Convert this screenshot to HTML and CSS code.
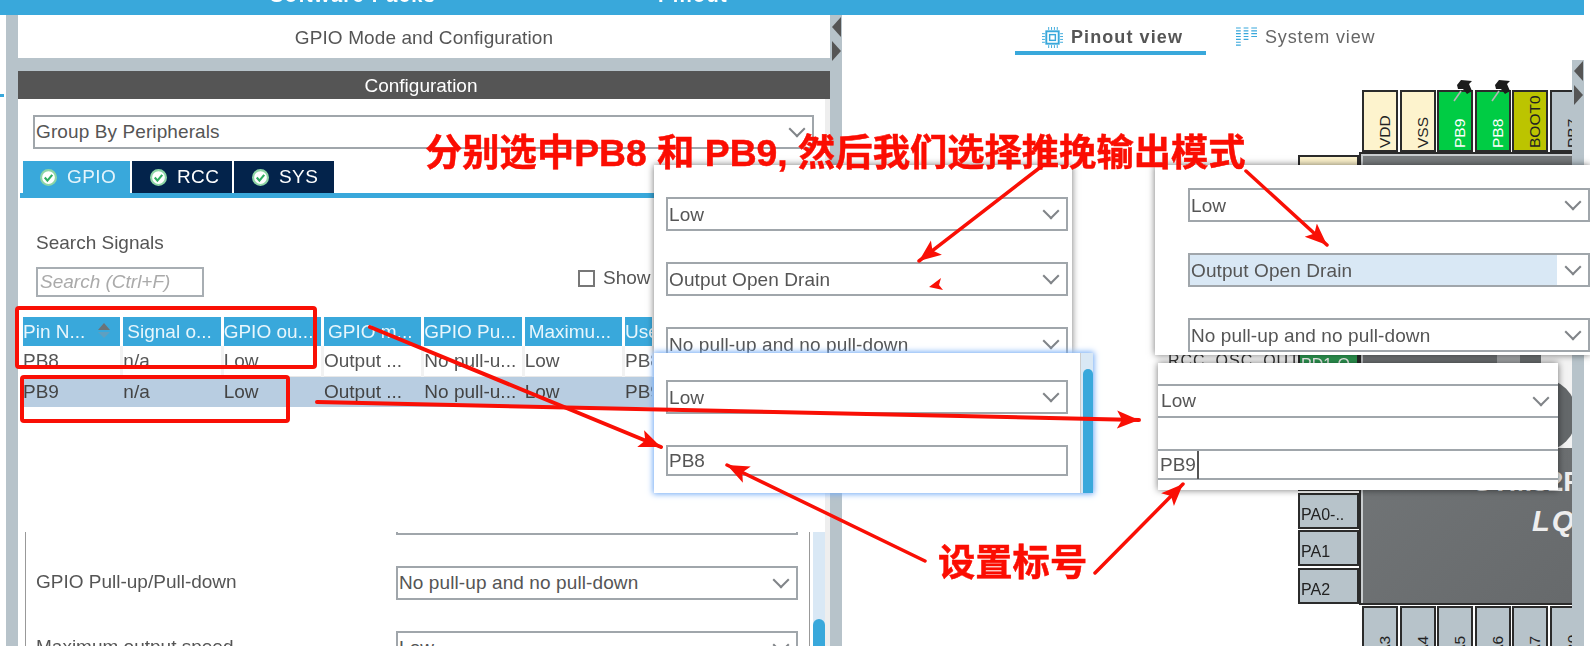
FILE: index.html
```html
<!DOCTYPE html>
<html lang="en">
<head>
  <meta charset="UTF-8" />
  <title>GPIO Mode and Configuration</title>
  <link rel="stylesheet" href="styles.css">
</head>
<body>
  <!-- Top menu, only the lower edge of the labels shows -->
  <header class="topbar">
    <span class="topbar-item packs">Software Packs</span>
    <span class="topbar-item pinout">Pinout</span>
  </header>

  <div class="main">
    <div class="gutter"><div class="gutter-mark"></div></div>

    <!-- Left panel -->
    <section class="panel">
      <div class="panel-title">GPIO Mode and Configuration</div>
      <div class="panel-header">Configuration</div>
      <div class="panel-body">
        <div class="select group-select"><span>Group By Peripherals</span></div>
        <div class="tabs">
          <div class="tab active"><svg class="check" viewBox="0 0 16 16"><circle cx="8" cy="8" r="7" fill="#fff" stroke="#8ed6a6" stroke-width="2"/><path d="M4.5 8l2.5 3 4.5-5.5" fill="none" stroke="#2fae62" stroke-width="2"/></svg>GPIO</div>
          <div class="tab"><svg class="check" viewBox="0 0 16 16"><circle cx="8" cy="8" r="7" fill="#fff" stroke="#8ed6a6" stroke-width="2"/><path d="M4.5 8l2.5 3 4.5-5.5" fill="none" stroke="#2fae62" stroke-width="2"/></svg>RCC</div>
          <div class="tab"><svg class="check" viewBox="0 0 16 16"><circle cx="8" cy="8" r="7" fill="#fff" stroke="#8ed6a6" stroke-width="2"/><path d="M4.5 8l2.5 3 4.5-5.5" fill="none" stroke="#2fae62" stroke-width="2"/></svg>SYS</div>
        </div>
        <div class="search-label">Search Signals</div>
        <div class="search-row">
          <div class="search-input">Search (Ctrl+F)</div>
          <div class="show-modified"><span class="checkbox"></span>Show</div>
        </div>

        <div class="pin-table">
          <div class="th">Pin N...<span class="sort"></span></div>
          <div class="th pad">Signal o...</div>
          <div class="th">GPIO ou...</div>
          <div class="th pad">GPIO m...</div>
          <div class="th">GPIO Pu...</div>
          <div class="th pad">Maximu...</div>
          <div class="th">User Label</div>

          <div class="td">PB8</div>
          <div class="td">n/a</div>
          <div class="td">Low</div>
          <div class="td">Output ...</div>
          <div class="td">No pull-u...</div>
          <div class="td">Low</div>
          <div class="td">PB8</div>

          <div class="td sel">PB9</div>
          <div class="td sel">n/a</div>
          <div class="td sel">Low</div>
          <div class="td sel">Output ...</div>
          <div class="td sel">No pull-u...</div>
          <div class="td sel">Low</div>
          <div class="td sel">PB9</div>
        </div>

        <div class="settings">
          <div class="settings-form">
            <div class="select-stub"></div>
            <div class="form-row">
              <label>GPIO Pull-up/Pull-down</label>
              <div class="select"><span>No pull-up and no pull-down</span></div>
            </div>
            <div class="form-row">
              <label>Maximum output speed</label>
              <div class="select"><span>Low</span></div>
            </div>
          </div>
          <div class="settings-scroll"><div class="thumb"></div></div>
        </div>
      </div>
    </section>

    <div class="splitter">
      <span class="arrow-left"></span>
      <span class="arrow-right"></span>
    </div>

    <!-- Right panel -->
    <section class="pinout-pane">
      <nav class="view-tabs">
        <div class="view-tab current">
          <svg class="view-icon" viewBox="0 0 22 22" fill="none" stroke="#39a8db">
            <rect x="4.5" y="4.5" width="13" height="13" stroke-width="2"/>
            <rect x="8" y="8" width="6" height="6" stroke-width="1.5"/>
            <path d="M7 0v3M10 0v3M13 0v3M16 0v3M7 19v3M10 19v3M13 19v3M16 19v3M0 7h3M0 10h3M0 13h3M0 16h3M19 7h3M19 10h3M19 13h3M19 16h3" stroke-width="1"/>
          </svg>
          Pinout view
        </div>
        <div class="view-tab">
          <svg class="view-icon" viewBox="0 0 22 22" fill="none" stroke="#39a8db" stroke-width="1.2">
            <path d="M0 1h5M0 4h5M0 7h5M0 10h5M0 13h5M0 16h5M0 19h5M8 1h5M8 4h5M8 7h5M8 10h5M8 13h5M16 1h6M16 4h6M16 7h6M16 10h6"/>
          </svg>
          System view
        </div>
      </nav>

      <div class="chip-canvas">
        <div class="pins-top">
          <div class="pin cream v">VDD</div>
          <div class="pin cream v">VSS</div>
          <div class="pin green v">PB9
            <svg class="pushpin" viewBox="0 0 20 22"><path d="M1 21l7-10" stroke="#b5b5b5" stroke-width="1.6"/><path d="M4 5l4-5 11 1-3 3 3 7-5 3-4-5-5 0z" fill="#1c1c1c"/></svg>
          </div>
          <div class="pin green v">PB8
            <svg class="pushpin" viewBox="0 0 20 22"><path d="M1 21l7-10" stroke="#b5b5b5" stroke-width="1.6"/><path d="M4 5l4-5 11 1-3 3 3 7-5 3-4-5-5 0z" fill="#1c1c1c"/></svg>
          </div>
          <div class="pin olive v">BOOT0</div>
          <div class="pin grey v">PB7</div>
        </div>

        <div class="pins-left">
          <div class="pin cream">VBAT</div>
          <div class="pin grey">PC13</div>
          <div class="pin grey">PC14</div>
          <div class="pin grey">PC15</div>
          <div class="pin dkgreen">PD0-O..</div>
          <div class="pin dkgreen">PD1-O..</div>
          <div class="pin grey">NRST</div>
          <div class="pin cream">VSSA</div>
          <div class="pin cream">VDDA</div>
          <div class="pin grey">PA0-..</div>
          <div class="pin grey">PA1</div>
          <div class="pin grey">PA2</div>
        </div>
        <div class="pin-signal">RCC_OSC_OUT</div>

        <div class="chip">
          <div class="chip-logo"><div class="logo-circle"></div></div>
          <div class="logo-block"></div>
          <div class="chip-name">STM32F</div>
          <div class="chip-package">LQFP48</div>
        </div>

        <div class="pins-bottom">
          <div class="pin grey v">PA3</div>
          <div class="pin grey v">PA4</div>
          <div class="pin grey v">PA5</div>
          <div class="pin grey v">PA6</div>
          <div class="pin grey v">PA7</div>
          <div class="pin grey v">PB0</div>
        </div>
      </div>
    </section>

    <div class="splitter right">
      <span class="arrow-left"></span>
      <span class="arrow-right"></span>
    </div>
  </div>

  <!-- Pasted-in crops of the settings form -->
  <div class="popup popup-a">
    <div class="select"><span>Low</span></div>
    <div class="select"><span>Output Open Drain</span></div>
    <div class="select"><span>No pull-up and no pull-down</span></div>
  </div>
  <div class="popup popup-b">
    <div class="select"><span>Low</span></div>
    <div class="select highlighted"><span>Output Open Drain</span></div>
    <div class="select"><span>No pull-up and no pull-down</span></div>
  </div>
  <div class="popup popup-c">
    <div class="select"><span>Low</span></div>
    <div class="text-field">PB8</div>
    <div class="popup-scroll"><div class="thumb"></div></div>
  </div>
  <div class="popup popup-d">
    <div class="select"><span>Low</span></div>
    <div class="text-field"><span class="caret">PB9</span></div>
  </div>

  <!-- Red annotations -->
  <svg class="marks" width="1590" height="646" viewBox="0 0 1590 646">
    <defs>
      <marker id="head" markerUnits="userSpaceOnUse" markerWidth="24" markerHeight="20" refX="22" refY="10" orient="auto">
        <path d="M0 1L22 10L0 19L5 10z" fill="#f90f05"/>
      </marker>
    </defs>
    <g fill="none" stroke="#f90f05" stroke-linejoin="round" stroke-linecap="round">
      <rect x="17" y="308" width="298" height="59" rx="2" stroke-width="4"/>
      <rect x="22" y="377" width="266" height="44" rx="2" stroke-width="4"/>
      <path d="M1042 166L919 261" stroke-width="3.5" marker-end="url(#head)"/>
      <path d="M1246 171L1327 245" stroke-width="3.5" marker-end="url(#head)"/>
      <path d="M370 327L661 447" stroke-width="4" marker-end="url(#head)"/>
      <path d="M317 402L1139 420" stroke-width="4" marker-end="url(#head)"/>
      <path d="M925 561L727 465" stroke-width="3.5" marker-end="url(#head)"/>
      <path d="M1095 573L1183 484" stroke-width="3.5" marker-end="url(#head)"/>
    </g>
    <path d="M929 287L941 278L939 285L943 290z" fill="#f90f05"/>
  </svg>
  <div class="note note-top">分别选中PB8 和 PB9, 然后我们选择推挽输出模式</div>
  <div class="note note-bottom">设置标号</div>
</body>
</html>
```

FILE: styles.css
```css
* {
  box-sizing: border-box;
}

html, body {
  margin: 0;
  height: 646px;
  overflow: hidden;
}

body {
  position: relative;
  width: 1590px;
  background: white;
  color: #555;
  font-family: "Liberation Sans", Arial, sans-serif;
  font-size: 19px;
}

/* The source is a soft, upscaled capture */
.topbar,
.main,
.popup {
  filter: blur(0.35px);
}

/* Top bar */
.topbar {
  display: flex;
  width: 1584px;
  height: 15px;
  overflow: hidden;
  background: #39a8db;
}

.topbar-item {
  color: white;
  font-weight: bold;
  font-size: 20px;
  letter-spacing: 1.3px;
  line-height: 20px;
  margin-top: -15px;
}

.packs {
  margin-left: 270px;
}

.pinout {
  margin-left: 222px;
}

.main {
  display: flex;
  height: 631px;
}

.gutter {
  width: 18px;
  background: linear-gradient(to right, white 6px, #b7c3ca 6px);
}

.gutter-mark {
  width: 4px;
  height: 3px;
  margin-top: 79px;
  background: #39a8db;
}

/* Left panel */
.panel {
  width: 812px;
  display: flex;
  flex-direction: column;
}

.panel-title {
  height: 43px;
  line-height: 45px;
  text-align: center;
  letter-spacing: 0.1px;
  margin-bottom: 13px;
}

.panel-header {
  height: 28px;
  line-height: 29px;
  padding-right: 6px;
  text-align: center;
  background: #555;
  color: white;
  box-shadow: 0 -13px 0 #b7c3ca;
}

.panel-body {
  flex: 1;
  overflow: hidden;
  padding-top: 16px;
  background: linear-gradient(to right, white 807px, #eee 807px);
}

/* Selects */
.select {
  position: relative;
  height: 34px;
  border: 2px solid #a0a6ab;
  background: white;
  line-height: 30px;
  padding-left: 1px;
  white-space: nowrap;
  letter-spacing: 0.1px;
}

.select::after {
  content: "";
  position: absolute;
  right: 9px;
  top: 6px;
  width: 10px;
  height: 10px;
  border-right: 2px solid #808488;
  border-bottom: 2px solid #808488;
  transform: rotate(45deg);
}

.select.highlighted span {
  display: block;
  width: 367px;
  height: 30px;
  margin-left: -1px;
  padding-left: 1px;
  background: #d9e8f5;
}

.group-select {
  width: 781px;
  margin-left: 15px;
}

.text-field {
  height: 31px;
  border: 2px solid #a0a6ab;
  line-height: 28px;
  padding-left: 1px;
  background: white;
}

/* GPIO / RCC / SYS tabs */
.tabs {
  display: flex;
  gap: 2px;
  height: 37px;
  margin: 12px 12px 0 2px;
  padding-left: 3px;
  border-bottom: 5px solid #39a8db;
}

.tab {
  display: flex;
  align-items: center;
  gap: 10px;
  width: 100px;
  height: 32px;
  padding-left: 18px;
  background: #03234b;
  color: white;
  letter-spacing: 0.4px;
}

.tab.active {
  width: 107px;
  padding-left: 17px;
  background: #39a8db;
  color: #e4f4fb;
}

.check {
  width: 17px;
  height: 17px;
}

/* Search */
.search-label {
  margin: 35px 0 0 18px;
  line-height: 20px;
}

.search-row {
  display: flex;
  align-items: flex-start;
  margin: 14px 0 0 18px;
}

.search-input {
  width: 168px;
  height: 30px;
  border: 2px solid #a8aeb3;
  line-height: 26px;
  padding-left: 2px;
  color: #aaa;
  font-style: italic;
}

.show-modified {
  display: flex;
  align-items: center;
  gap: 8px;
  margin: 0 0 0 374px;
}

.checkbox {
  width: 17px;
  height: 17px;
  border: 2px solid #777;
}

/* Pin table, the last column runs on under the pasted crop */
.pin-table {
  display: grid;
  grid-template-columns: repeat(6, 97.33px) 27px;
  column-gap: 3px;
  grid-template-rows: 29px 31px 30px;
  margin: 20px 0 0 5px;
  white-space: nowrap;
}

.th {
  position: relative;
  background: #39a8db;
  color: #e8f6fc;
  line-height: 29px;
  overflow: hidden;
}

.th.pad {
  padding-left: 4px;
}

.sort {
  position: absolute;
  left: 75px;
  top: 6px;
  border: 6px solid transparent;
  border-top: 0;
  border-bottom: 7px solid #6b7378;
}

.sort::after {
  content: "";
  position: absolute;
  left: -6px;
  top: 9px;
  border: 6px solid transparent;
  border-bottom: 0;
  border-top: 6px solid #5f9fc0;
}

.td {
  line-height: 30px;
  border-bottom: 1px solid #e8e8e8;
  overflow: hidden;
  box-shadow: 3px 0 0 #f2f2f2;
}

.td.sel {
  background: #b8cde1;
  box-shadow: 3px 0 0 #b8cde1;
  border-bottom: 0;
  color: #444;
}

/* Settings form below the table */
.settings {
  display: flex;
  gap: 3px;
  margin: 125px 0 0 7px;
}

.settings-form {
  width: 785px;
  height: 120px;
  border-left: 1px solid #999;
  border-right: 1px solid #999;
  padding-left: 10px;
}

.select-stub {
  width: 402px;
  height: 3px;
  margin-left: 360px;
  border: 2px solid #a0a6ab;
  border-top: 0;
}

.form-row {
  display: grid;
  grid-template-columns: 360px 402px;
  align-items: center;
  margin-top: 31px;
}

.form-row label {
  margin-top: -3px;
}

.settings-scroll {
  width: 12px;
  height: 120px;
  overflow: hidden;
  background: #d9e8f5;
}

.settings-scroll .thumb {
  height: 40px;
  margin-top: 87px;
  border-radius: 6px 6px 0 0;
  background: #39a8db;
}

/* Arrows on the splitters */
.splitter {
  width: 12px;
  background: #b7c3ca;
  padding: 2px 0 0 2px;
}

.splitter.right {
  margin-top: 45px;
  padding-top: 1px;
}

.arrow-left,
.arrow-right {
  display: block;
  width: 0;
  border: 10px solid transparent;
  border-left-width: 0;
  border-right-width: 0;
}

.arrow-left {
  border-right: 9px solid #555;
}

.arrow-right {
  margin-top: 4px;
  border-left: 9px solid #555;
}

/* Right panel */
.pinout-pane {
  width: 730px;
  display: flex;
  flex-direction: column;
}

.view-tabs {
  display: flex;
  height: 40px;
  padding-left: 173px;
}

.view-tab {
  display: flex;
  align-items: center;
  gap: 8px;
  height: 40px;
  padding-top: 4px;
  color: #666;
  font-size: 18px;
  letter-spacing: 0.85px;
  margin-left: 30px;
}

.view-tab.current {
  justify-content: center;
  width: 191px;
  margin-left: 0;
  padding: 8px 0 0 4px;
  color: #555;
  font-weight: bold;
  letter-spacing: 1.1px;
  border-bottom: 4px solid #39a8db;
}

.view-icon {
  width: 21px;
  height: 21px;
}

/* Chip diagram */
.chip-canvas {
  position: relative;
  flex: 1;
  overflow: hidden;
}

.pins-top,
.pins-bottom {
  position: absolute;
  left: 520px;
  display: flex;
  gap: 1.5px;
}

.pins-top {
  top: 35px;
}

.pins-bottom {
  top: 551px;
}

.pins-left {
  position: absolute;
  left: 456px;
  top: 100px;
  display: flex;
  flex-direction: column;
  gap: 1.5px;
}

.pin {
  position: relative;
  flex: none;
  width: 61px;
  height: 36px;
  border: 2px solid #2b2b2b;
  color: #222;
  font-size: 16px;
  line-height: 40px;
  padding-left: 1px;
  white-space: nowrap;
}

.pin.v {
  width: 36px;
  height: 62px;
  padding: 2px 0 0 0;
  font-size: 15.5px;
  line-height: 41px;
  writing-mode: vertical-rl;
  transform: rotate(180deg);
  text-align: left;
}

.cream { background: #fdf3cd; }
.green { background: #00cc44; color: white; }
.dkgreen { background: #2f9e55; color: white; }
.olive { background: #bcc400; }
.grey { background: #b7c3ca; }

/* local bottom is the top on screen, the pin cell is turned 180deg */
.pushpin {
  position: absolute;
  left: -2px;
  bottom: -12px;
  width: 20px;
  height: 22px;
  transform: rotate(180deg);
}

.pin-signal {
  position: absolute;
  left: 326px;
  top: 297px;
  font-size: 16px;
  color: #333;
  letter-spacing: 1px;
}

.chip {
  position: absolute;
  left: 517px;
  top: 97px;
  width: 240px;
  height: 453px;
  overflow: hidden;
  border: 2px solid #2b2b2b;
  box-shadow: inset 2px 2px 0 #c9cdcf;
  background: linear-gradient(135deg, #7a7e80, #66696b);
}

.chip-logo {
  position: absolute;
  left: 180px;
  top: 201px;
  width: 60px;
  height: 93px;
  overflow: hidden;
  background: #f3f3f3;
}

.logo-circle {
  position: absolute;
  left: -38px;
  top: 23px;
  width: 74px;
  height: 74px;
  border-radius: 50%;
  background: #64686a;
}

.logo-block {
  position: absolute;
  left: 136px;
  top: 201px;
  width: 23px;
  height: 10px;
  background: #a9acae;
}

.chip-name,
.chip-package {
  position: absolute;
  color: #eee;
  font-weight: bold;
  white-space: nowrap;
}

.chip-name {
  left: 112px;
  top: 312px;
  font-size: 28px;
}

.chip-package {
  left: 171px;
  top: 351px;
  font-size: 29px;
  font-style: italic;
  letter-spacing: 2px;
}

/* Pasted crops */
.popup {
  position: absolute;
  display: flex;
  flex-direction: column;
  gap: 31px;
  overflow: hidden;
  background: white;
  box-shadow: 0 0 7px rgba(0, 0, 0, 0.55);
}

.popup .select {
  line-height: 31px;
}

.popup-a {
  left: 654px;
  top: 165px;
  width: 418px;
  height: 188px;
  padding: 32px 4px 0 12px;
}

.popup-b {
  left: 1155px;
  top: 165px;
  width: 435px;
  height: 190px;
  padding: 23px 0 0 33px;
}

.popup-c {
  left: 654px;
  top: 353px;
  width: 439px;
  height: 140px;
  padding: 27px 25px 0 12px;
  box-shadow: 0 0 6px 1px #6ea8f5;
}

.popup-d {
  left: 1158px;
  top: 363px;
  width: 400px;
  height: 127px;
  padding-top: 21px;
}

.popup-d .select {
  border-left: 0;
  border-right: 0;
  padding-left: 3px;
  line-height: 30px;
}

.popup-d .select::after {
  right: 11px;
}

.popup-d .text-field {
  border-left: 0;
  border-right: 0;
  padding-left: 2px;
}

.caret {
  display: inline-block;
  padding-right: 1px;
  border-right: 2px solid #555;
}

.popup-scroll {
  position: absolute;
  right: 0;
  top: 0;
  width: 13px;
  height: 140px;
  border-left: 1px solid #ccc;
  background: #d9e8f5;
}

.popup-scroll .thumb {
  height: 125px;
  margin: 16px 0 0 2px;
  border-radius: 5px 5px 0 0;
  background: #39a8db;
}

/* Red notes */
.marks {
  position: absolute;
  left: 0;
  top: 0;
}

.note {
  position: absolute;
  color: #fb0d02;
  font-family: "Liberation Sans", "Noto Sans CJK SC", sans-serif;
  font-weight: bold;
  font-size: 37.3px;
  line-height: 42px;
  white-space: nowrap;
  -webkit-text-stroke: 0.5px #fb0d02;
}

.note-top {
  left: 425px;
  top: 132px;
}

.note-bottom {
  left: 938px;
  top: 542px;
}
```
